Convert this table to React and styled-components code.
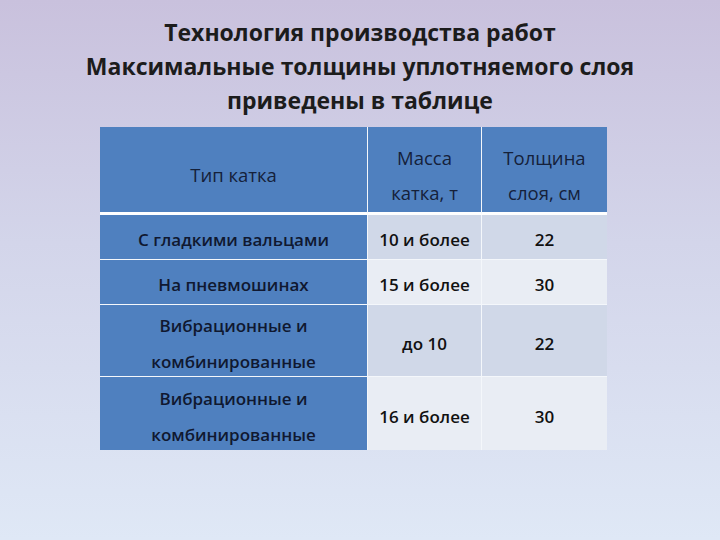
import React from "react";
import styled, { createGlobalStyle } from "styled-components";

const Global = createGlobalStyle`
  html, body { margin: 0; padding: 0; }
  body { width: 720px; height: 540px; overflow: hidden; }
`;

const Slide = styled.div`
  width: 720px;
  height: 540px;
  box-sizing: border-box;
  background: linear-gradient(180deg, #c9c1dd 0%, #d3d5ea 45%, #dfe8f6 100%);
  font-family: "Open Sans", "Noto Sans", sans-serif;
  display: flex;
  flex-direction: column;
  align-items: center;
  padding-top: 15px;
`;

const Title = styled.h1`
  margin: 0;
  font-size: 23px;
  font-weight: 700;
  line-height: 34px;
  color: #1c1c1c;
  text-align: center;
`;

const Table = styled.div`
  margin-top: 10px;
  align-self: flex-start;
  margin-left: 100px;
  width: 507px;
  display: grid;
  grid-template-columns: 268px 114px 125px;
  grid-template-rows: 88px 45px 45px 72px 73px;
`;

const Cell = styled.div`
  background: ${(p) => p.$bg};
  box-sizing: border-box;
  border-right: ${(p) => (p.$last ? "0" : "1px solid #f4f7fb")};
  border-bottom: ${(p) => (p.$bottom ? "0" : "1px solid #f4f7fb")};
  padding-top: 6px;
  display: flex;
  flex-direction: column;
  align-items: center;
  justify-content: center;
  text-align: center;
  font-size: 17px;
  font-weight: 600;
  line-height: 36px;
  color: ${(p) => (p.$dark ? "#101830" : "#111111")};
`;

const HeadCell = styled(Cell)`
  border-bottom: 3px solid #ffffff;
  padding-top: 10px;
  font-size: 18.5px;
  font-weight: 400;
  line-height: 35px;
  color: #15213a;
`;

const BLUE = "#4f80bf";
const ROW_A = "#d0d8e8";
const ROW_B = "#e9edf4";

const rows = [
  { type: ["С гладкими вальцами"], mass: "10 и более", depth: "22", bg: ROW_A },
  { type: ["На пневмошинах"], mass: "15 и более", depth: "30", bg: ROW_B },
  { type: ["Вибрационные и", "комбинированные"], mass: "до 10", depth: "22", bg: ROW_A },
  { type: ["Вибрационные и", "комбинированные"], mass: "16 и более", depth: "30", bg: ROW_B },
];

export default function App() {
  return (
    <Slide>
      <Global />
      <Title>
        Технология производства работ
        <br />
        Максимальные толщины уплотняемого слоя
        <br />
        приведены в таблице
      </Title>
      <Table>
        <HeadCell $bg={BLUE}>Тип катка</HeadCell>
        <HeadCell $bg={BLUE}>
          <span>Масса</span>
          <span>катка, т</span>
        </HeadCell>
        <HeadCell $bg={BLUE} $last>
          <span>Толщина</span>
          <span>слоя, см</span>
        </HeadCell>
        {rows.map((r, i) => {
          const bottom = i === rows.length - 1;
          return (
            <React.Fragment key={i}>
              <Cell $bg={BLUE} $dark $bottom={bottom}>
                {r.type.map((t) => (
                  <span key={t}>{t}</span>
                ))}
              </Cell>
              <Cell $bg={r.bg} $bottom={bottom}>{r.mass}</Cell>
              <Cell $bg={r.bg} $bottom={bottom} $last>{r.depth}</Cell>
            </React.Fragment>
          );
        })}
      </Table>
    </Slide>
  );
}
